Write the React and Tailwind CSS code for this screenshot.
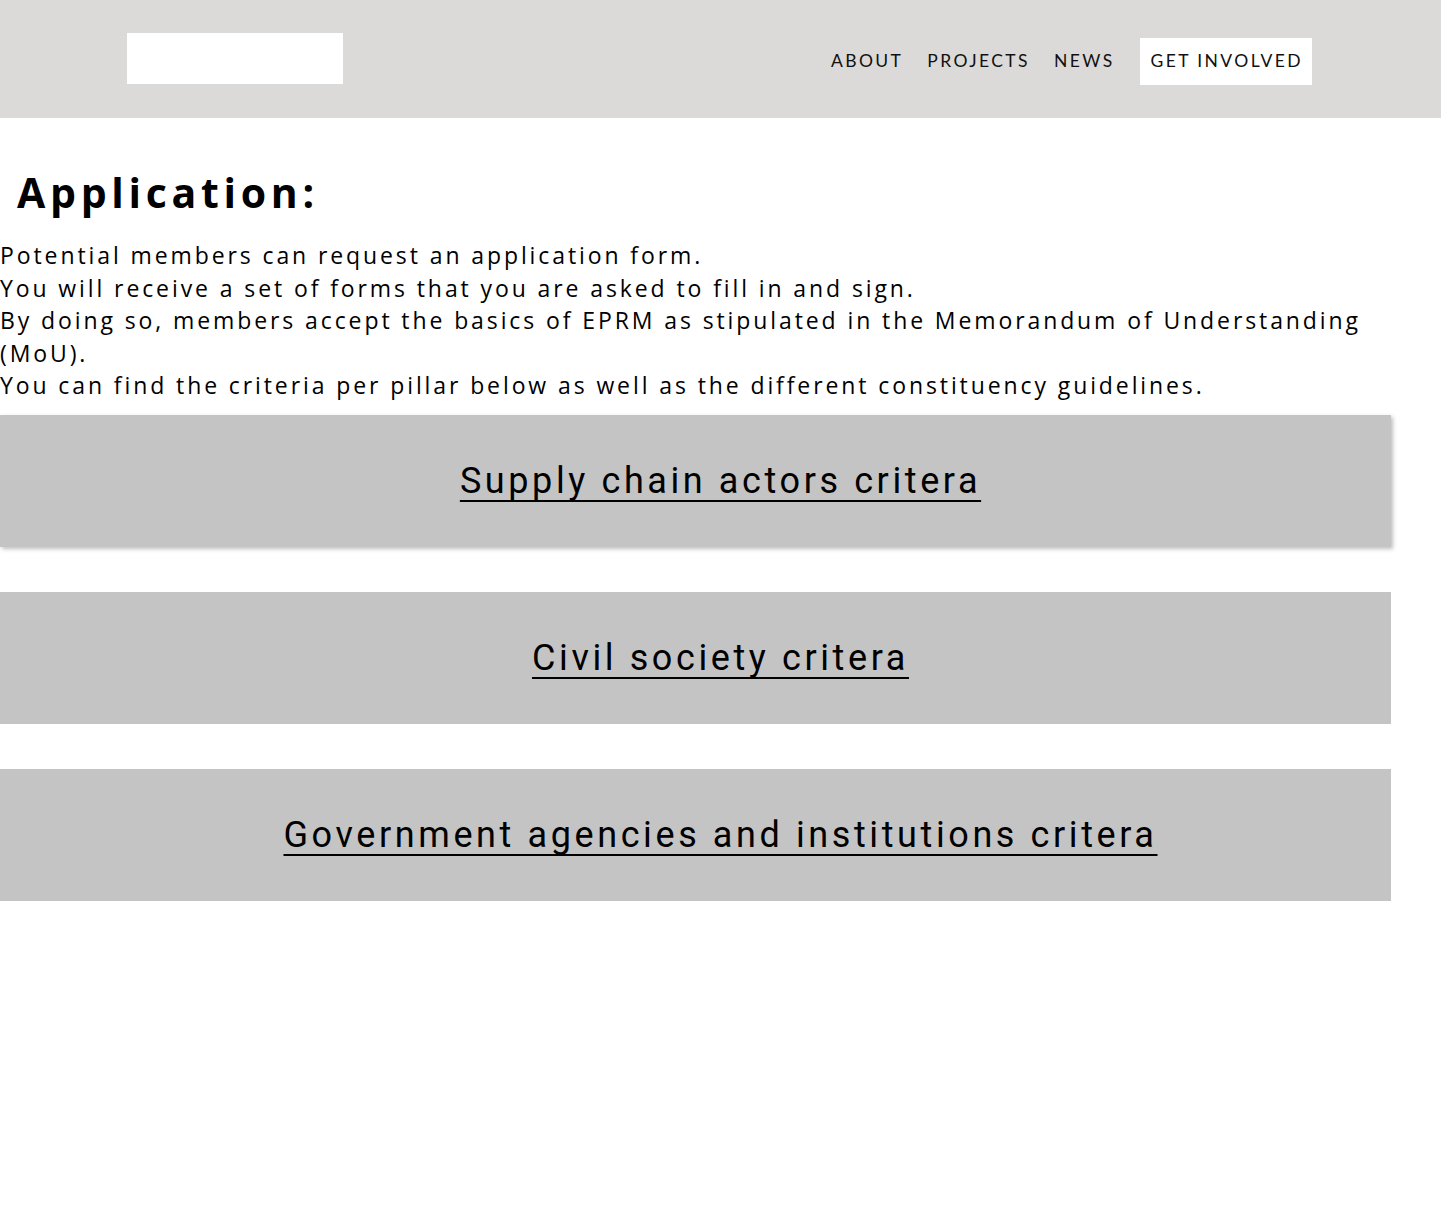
import React from 'react';

const cards = [
  { label: 'Supply chain actors critera', shadow: true },
  { label: 'Civil society critera', shadow: false },
  { label: 'Government agencies and institutions critera', shadow: false },
];

export default function App() {
  return (
    <div className="min-h-[1218px] bg-white">
      {/* Header */}
      <header className="h-[118px] bg-[#dbdad8] flex items-center">
        <div className="w-[216px] h-[51px] bg-white ml-[127px] -mt-[1px]"></div>
        <nav className="ml-auto mr-[129px] flex items-center text-[17.5px] tracking-[2.4px] text-[#111] font-['Lato',sans-serif] uppercase mt-[5px]">
          <a className="mr-[24px]">About</a>
          <a className="mr-[24px]">Projects</a>
          <a className="mr-[25px]">News</a>
          <a className="bg-white h-[47px] pl-[11px] pr-[9px] flex items-center">Get Involved</a>
        </nav>
      </header>

      {/* Intro */}
      <main className="font-['Open_Sans',sans-serif] text-black">
        <h1 className="pl-[17px] pt-[48px] text-[41px] leading-[52px] font-bold tracking-[4.7px]">Application:</h1>
        <div className="mt-[21px] text-[23px] leading-[32.5px] tracking-[2.9px] w-[1390px]">
          <p>Potential members can request an application form.</p>
          <p>You will receive a set of forms that you are asked to fill in and sign.</p>
          <p>By doing so, members accept the basics of EPRM as stipulated in the Memorandum of Understanding (MoU).</p>
          <p>You can find the criteria per pillar below as well as the different constituency guidelines.</p>
        </div>

        <div className="mt-[13px] flex flex-col gap-[45px] w-[1391px]">
          {cards.map((c) => (
            <div
              key={c.label}
              className={`h-[132px] bg-[#c4c4c4] flex items-center justify-center pl-[50px] ${c.shadow ? 'shadow-[2px_2px_4px_rgba(0,0,0,0.25)]' : ''}`}
            >
              <a className="font-['Roboto',sans-serif] text-[36px] tracking-[3.6px] underline underline-offset-[7px] decoration-[2px] [text-decoration-skip-ink:none] text-black">
                {c.label}
              </a>
            </div>
          ))}
        </div>
      </main>
    </div>
  );
}
